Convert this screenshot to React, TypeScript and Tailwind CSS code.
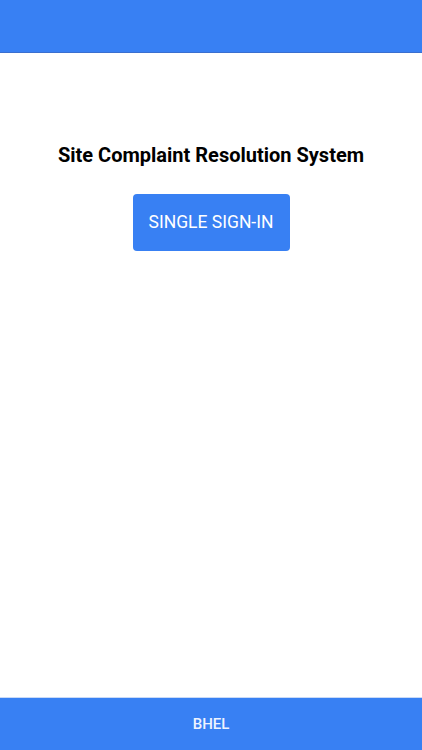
export default function App() {
  return (
    <div className="flex h-[750px] w-full flex-col bg-white font-['Roboto',sans-serif]">
      {/* Toolbar */}
      <header className="h-[53px] shrink-0 border-b border-[#3a6fcf] bg-[#3880f3]" />

      {/* Content */}
      <main className="flex flex-1 flex-col items-center pt-[90px]">
        <h1 className="text-[20px] font-bold leading-6 text-black">
          Site Complaint Resolution System
        </h1>
        <button className="mt-[27px] h-[57px] w-[157px] rounded-[4px] bg-[#3880f3] text-[17.5px] text-white">
          SINGLE SIGN-IN
        </button>
      </main>

      {/* Footer */}
      <footer className="flex h-[53px] shrink-0 items-center justify-center border-t border-[#c9daf7] bg-[#3880f3]">
        <span className="text-[15px] font-medium text-[#eef3ff]">BHEL</span>
      </footer>
    </div>
  );
}
